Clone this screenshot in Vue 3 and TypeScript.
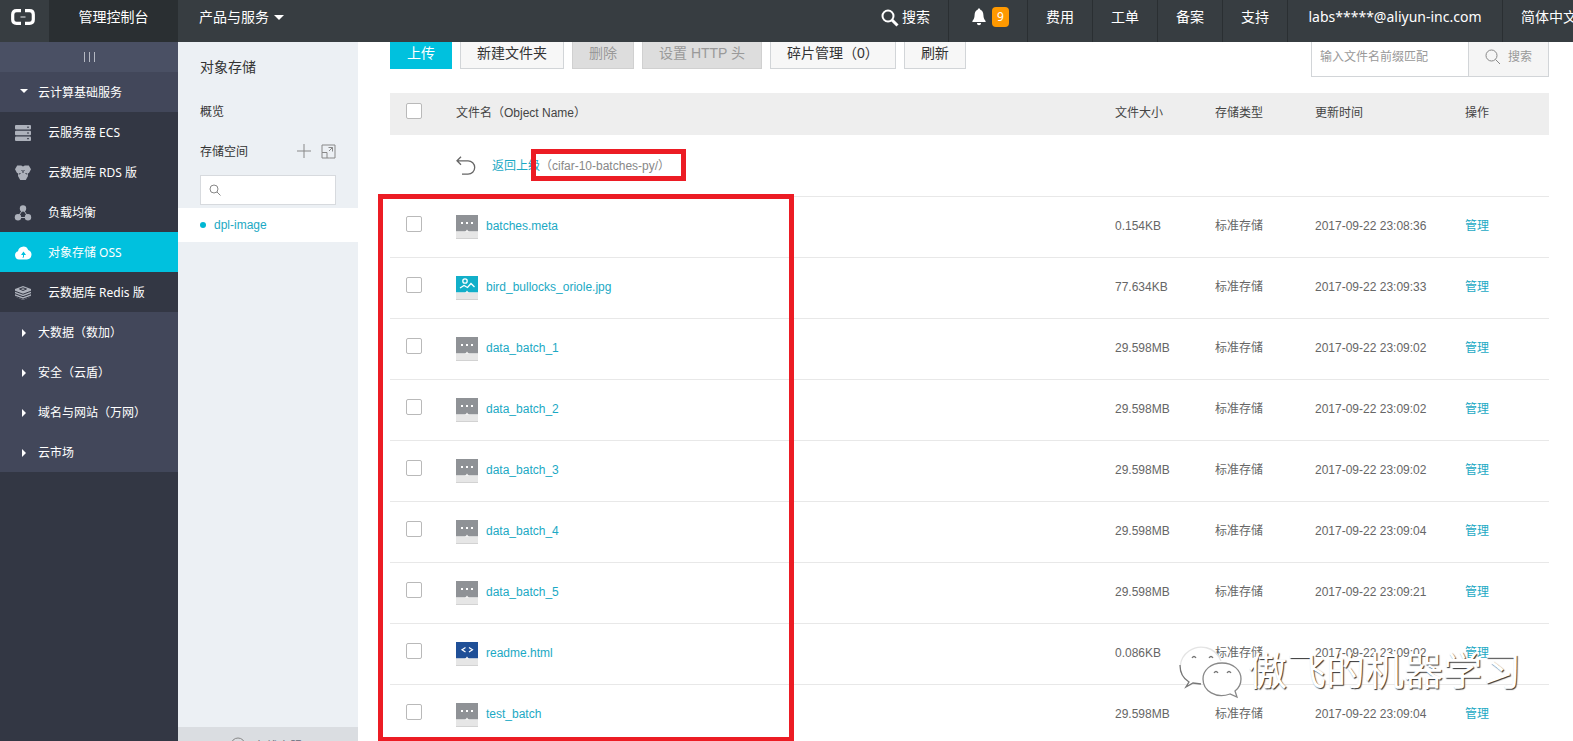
<script setup lang="ts">
import { ref } from 'vue'

type FileKind = 'other' | 'image' | 'code'
interface FileRow {
  name: string
  kind: FileKind
  size: string
  time: string
}

const files: FileRow[] = [
  { name: 'batches.meta', kind: 'other', size: '0.154KB', time: '2017-09-22 23:08:36' },
  { name: 'bird_bullocks_oriole.jpg', kind: 'image', size: '77.634KB', time: '2017-09-22 23:09:33' },
  { name: 'data_batch_1', kind: 'other', size: '29.598MB', time: '2017-09-22 23:09:02' },
  { name: 'data_batch_2', kind: 'other', size: '29.598MB', time: '2017-09-22 23:09:02' },
  { name: 'data_batch_3', kind: 'other', size: '29.598MB', time: '2017-09-22 23:09:02' },
  { name: 'data_batch_4', kind: 'other', size: '29.598MB', time: '2017-09-22 23:09:04' },
  { name: 'data_batch_5', kind: 'other', size: '29.598MB', time: '2017-09-22 23:09:21' },
  { name: 'readme.html', kind: 'code', size: '0.086KB', time: '2017-09-22 23:09:02' },
  { name: 'test_batch', kind: 'other', size: '29.598MB', time: '2017-09-22 23:09:04' },
]

const products = [
  { id: 'ecs', label: '云服务器 ECS' },
  { id: 'rds', label: '云数据库 RDS 版' },
  { id: 'slb', label: '负载均衡' },
  { id: 'oss', label: '对象存储 OSS' },
  { id: 'redis', label: '云数据库 Redis 版' },
]
const groups = ['大数据（数加）', '安全（云盾）', '域名与网站（万网）', '云市场']
const topLinks = ['费用', '工单', '备案', '支持']

const selected = ref<string[]>([])
const prefix = ref('')
const bucketQuery = ref('')

function toggleAll(e: Event) {
  selected.value = (e.target as HTMLInputElement).checked ? files.map((f) => f.name) : []
}
</script>

<template>
  <div class="page">
    <header class="topbar">
      <a class="logo" href="#" aria-label="首页">
        <svg width="24" height="16" viewBox="0 0 24 16">
          <path d="M10 1.700H5.500Q1.700 1.700 1.700 5.500V10.500Q1.700 14.300 5.500 14.300H10M14 1.700H18.500Q22.300 1.700 22.300 5.500V10.500Q22.300 14.300 18.500 14.300H14" fill="none" stroke="#fff" stroke-width="3.200" />
          <path d="M9.500 8h5" stroke="#aeb1b3" stroke-width="1.500" />
        </svg>
      </a>
      <a class="console" href="#">管理控制台</a>
      <button class="products" type="button">产品与服务<span class="caret"></span></button>
      <nav class="topnav">
        <a class="find" href="#">
          <svg width="18" height="18" viewBox="0 0 18 18" fill="none" stroke="#fff">
            <circle cx="7" cy="7" r="5.500" stroke-width="2" />
            <path d="M11 11l5.500 5.500" stroke-width="3" />
          </svg>搜索</a>
        <a class="bell" href="#" aria-label="消息">
          <svg width="14" height="18" viewBox="0 0 14 18" fill="#fff">
            <path d="M7 0.500c.8 0 1.300.5 1.300 1.300C10.500 2.500 11.300 4.500 11.400 7c.1 3 .8 4.500 2.200 6v1H.4v-1C1.800 11.500 2.500 10 2.600 7c.1-2.500.9-4.500 3.100-5.200C5.700 1 6.200.500 7 .500zM5 15h4c0 1.300-.8 2.300-2 2.300S5 16.300 5 15z" />
          </svg>
          <span class="badge">9</span>
        </a>
        <a v-for="l in topLinks" :key="l" href="#">{{ l }}</a>
        <a class="account" href="#">labs*****@aliyun-inc.com</a>
        <a class="lang" href="#">简体中文</a>
      </nav>
    </header>

    <div class="body">
      <aside class="side">
        <button class="fold" type="button" aria-label="收起导航"><i></i><i></i><i></i></button>
        <button class="group open" type="button"><span class="tri down"></span>云计算基础服务</button>
        <a v-for="p in products" :key="p.id" href="#" class="product" :class="{ active: p.id === 'oss' }">
          <svg width="18" height="18" viewBox="0 0 18 18">
            <g v-if="p.id === 'ecs'">
              <rect x="1" y="1" width="16" height="4.500" rx="1" />
              <rect x="1" y="6.700" width="16" height="4.500" rx="1" />
              <rect x="1" y="12.400" width="16" height="4.500" rx="1" />
              <path class="cut" d="M13 3.200h2M13 9h2M13 14.700h2" />
            </g>
            <g v-else-if="p.id === 'rds'">
              <path d="M3.200 1.500h4L9 2.500l1.800-1h4L17 5.200l-2 3.800-1.300.6.300 2.400-2.200 4H6.200L4 12l.3-2.400L3 9 1 5.200z" />
              <path class="cut" d="M7.500 6l1.500 1.500L10.500 6M9 7.500V9M5 10l1.500-.5M13 10l-1.500-.5" />
            </g>
            <g v-else-if="p.id === 'slb'">
              <path class="line thin" d="M9 5L4 13M9 5l5 8M4 13.500h10" />
              <circle cx="9" cy="4.500" r="3.200" /><circle cx="4" cy="13.200" r="3.200" /><circle cx="14" cy="13.200" r="3.200" />
            </g>
            <g v-else-if="p.id === 'oss'">
              <path d="M5 15.500a4.200 4.200 0 0 1-1-8.200A5.300 5.300 0 0 1 14.200 6 4.900 4.900 0 0 1 13 15.500z" />
              <path d="M9.500 7.500l2.500 3.500h-2v1.500q0 1.500-2 1.500 1-.5 1-1.500V11H7z" fill="#00c1de" />
            </g>
            <g v-else>
              <path d="M9 2l8 3v7.500L9 16l-8-3.500V5z" />
              <path class="cut" d="M1 7.200l8 3 8-3M1 9.700l8 3 8-3M1 12.200l8 3 8-3M5.500 5L9 3.800 12.500 5 9 6.500z" />
            </g>
          </svg>{{ p.label }}</a>
        <button v-for="g in groups" :key="g" class="group" type="button"><span class="tri"></span>{{ g }}</button>
      </aside>

      <aside class="sub">
        <h1>对象存储</h1>
        <a class="overview" href="#">概览</a>
        <div class="space">
          <span>存储空间</span>
          <button type="button" aria-label="新建存储空间">
            <svg width="14" height="14" viewBox="0 0 14 14"><path d="M7 0v14M0 7h14" /></svg>
          </button>
          <button type="button" aria-label="展开">
            <svg class="expand" width="15" height="15" viewBox="0 0 15 15"><path d="M1 6V1h13v13H8.500M1 8.500h5V14H1zM1 6v2.500M6 14h2.500M8 7l3.500-3.500M7.500 3.500h4v4" /></svg>
          </button>
        </div>
        <label class="bucket-search">
          <svg width="12" height="12" viewBox="0 0 12 12"><circle cx="5" cy="5" r="4" /><path d="M8 8l3.500 3.500" /></svg>
          <input v-model="bucketQuery" type="text" aria-label="搜索存储空间" />
        </label>
        <a class="bucket" href="#">dpl-image</a>
        <a class="subfoot" href="#">
          <svg width="16" height="16" viewBox="0 0 16 16"><circle cx="8" cy="8" r="7" /></svg>在线客服</a>
      </aside>

      <main class="main">
        <div class="toolbar">
          <button class="btn primary" type="button">上传</button>
          <button class="btn" type="button">新建文件夹</button>
          <button class="btn" type="button" disabled>删除</button>
          <button class="btn" type="button" disabled>设置 HTTP 头</button>
          <button class="btn" type="button">碎片管理（0）</button>
          <button class="btn" type="button">刷新</button>
          <form class="search" @submit.prevent>
            <input v-model="prefix" type="text" placeholder="输入文件名前缀匹配" aria-label="文件名前缀" />
            <button type="submit">
              <svg width="16" height="16" viewBox="0 0 16 16"><circle cx="6.500" cy="6.500" r="5.500" /><path d="M10.500 10.500l4.500 4.500" /></svg>搜索
            </button>
          </form>
        </div>

        <div class="listing">
          <table>
            <colgroup>
              <col class="c-check" /><col /><col class="c-mid" /><col class="c-mid" /><col class="c-time" /><col class="c-op" />
            </colgroup>
            <thead>
              <tr>
                <th><input type="checkbox" aria-label="全选" @change="toggleAll" /></th>
                <th>文件名（Object Name）</th>
                <th>文件大小</th>
                <th>存储类型</th>
                <th>更新时间</th>
                <th>操作</th>
              </tr>
            </thead>
            <tbody>
              <tr class="up">
                <td></td>
                <td colspan="5">
                  <div class="back">
                    <svg width="20" height="20" viewBox="0 0 20 20"><path d="M5 .8L1 4.800l4 4M1.500 4.800H12a6.700 6.700 0 0 1 0 13.400H6" /></svg>
                    <a href="#">返回上级</a>
                    <span class="path">（cifar-10-batches-py/）<span class="mark mark-path"></span></span>
                  </div>
                </td>
              </tr>
              <tr v-for="f in files" :key="f.name">
                <td><input v-model="selected" type="checkbox" :value="f.name" :aria-label="f.name" /></td>
                <td>
                  <a class="file" href="#">
                    <svg class="ficon" :class="f.kind" width="22" height="24" viewBox="0 0 22 24">
                      <rect class="top" width="22" height="16.500" />
                      <rect y="16.500" width="22" height="7.500" fill="#e6e6e6" />
                      <path d="M0 23.500h22" stroke="#d2d2d2" />
                      <path d="M9 17l2-2.500 2 2.500z" fill="#f2f2f2" />
                      <path v-if="f.kind === 'other'" d="M5 8h2M10 8h2M15 8h2" stroke="#fff" stroke-width="2" />
                      <g v-else-if="f.kind === 'image'" fill="none" stroke="#fff" stroke-width="1.300">
                        <circle cx="9" cy="5" r="2.200" />
                        <path d="M4 12l4-2.500 3.500 2L15 7.500l3.500 3.500" />
                      </g>
                      <path v-else d="M9.500 5.500L6 7.800l3.500 2.300M13 5.500l3.500 2.300-3.500 2.300" fill="none" stroke="#fff" stroke-width="1.200" />
                    </svg>{{ f.name }}</a>
                </td>
                <td>{{ f.size }}</td>
                <td>标准存储</td>
                <td>{{ f.time }}</td>
                <td><a href="#">管理</a></td>
              </tr>
            </tbody>
          </table>
          <span class="mark mark-files"></span>
        </div>
      </main>
    </div>

    <div class="watermark">
      <svg width="64" height="54" viewBox="0 0 64 54" fill="#fff" stroke-width="1.300">
        <path d="M22 39l-7-.5-8 3 3-5C-3 28 0 13 10 6c10-7 26-5 32 10" stroke="#e4e4e4" />
        <path d="M22 39l-8-1-7 4 3-5C5 34 1 28 1 20" stroke="#777" />
        <path d="M24 34c0-9 8-16 19-16s19 7 19 16c0 5-2 9-6 12l2 6-7-3c-14 5-27-3-27-15z" stroke="#888" />
        <path d="M13 13q2-3 4 0M30 13q2-3 4 0M35 28q2-3 4 0M48 28q2-3 4 0" fill="none" stroke="#777" />
      </svg>
      <span>傲飞的机器学习</span>
    </div>
  </div>
</template>

<style>
html, body, #app { height: 100%; }
body { margin: 0; overflow: hidden; }
</style>

<style scoped>
* { box-sizing: border-box; }
.page {
  position: relative;
  display: flex;
  flex-direction: column;
  height: 100%;
  overflow: hidden;
  background: #fff;
  color: #333;
  font: 12px/20px "Liberation Sans", "Noto Sans CJK SC", sans-serif;
}
a { color: #1ba9c4; text-decoration: none; }
button, input { font: inherit; color: inherit; border: 0; background: none; padding: 0; margin: 0; outline: 0; }
.topbar {
  position: relative;
  z-index: 2;
  display: flex;
  flex: none;
  height: 42px;
  background: #373d41;
  color: #fff;
  font: 14px/34px "Noto Sans", "Noto Sans CJK SC", sans-serif;
}
.topbar a, .products { color: #fff; white-space: nowrap; }
.logo { width: 49px; padding: 9px 0 0 11px; line-height: 0; }
.console { width: 129px; background: #2a2f32; text-align: center; }
.products { display: flex; align-items: center; height: 34px; padding-left: 21px; }
.caret { margin-left: 5px; border: 5px solid transparent; border-top-color: #fff; border-bottom: 0; }
.topnav { display: flex; margin-left: auto; margin-right: -22px; }
.topnav a { padding: 0 18px; border-left: 1px solid #2a2f32; }
.topnav .find { display: flex; gap: 3px; border: 0; }
.topnav .find svg { margin-top: 9px; }
.topnav .bell { display: flex; gap: 6px; padding-left: 23px; }
.topnav .account { width: 215px; text-align: center; }
.bell svg { margin-top: 8px; }
.badge { width: 17px; height: 20px; margin-top: 7px; border-radius: 4px; background: #ff9900; font-size: 12px; line-height: 20px; text-align: center; }
.body { display: flex; flex: 1; min-height: 0; }
.side { flex: none; width: 178px; background: #333744; color: #fff; font-family: "Noto Sans", "Noto Sans CJK SC", sans-serif; }
.fold { display: flex; justify-content: center; align-items: center; gap: 4px; width: 100%; height: 30px; background: #4a5064; }
.fold i { width: 1px; height: 10px; background: #b4b8c2; }
.group, .product { display: flex; align-items: center; width: 100%; height: 40px; padding-top: 2px; white-space: nowrap; }
.group { background: #42475a; text-align: left; padding-left: 22px; }
.tri { width: 16px; flex: none; }
.tri::before { content: ""; display: block; width: 0; border: 4px solid transparent; border-left-color: #fff; border-right: 0; }
.tri.down::before { margin: -4px 0 0 -2px; border: 4px solid transparent; border-top-color: #fff; border-bottom: 0; }
.product { gap: 16px; padding-left: 14px; color: #fff; }
.product svg { fill: #adb1bb; }
.product .cut { stroke: #333744; stroke-width: 1; fill: none; }
.product .line { stroke: #adb1bb; stroke-width: 2; fill: none; }
.product .thin { stroke-width: 1; }
.product.active { background: #00c1de; }
.product.active svg { fill: #fff; }
.sub { display: flex; flex-direction: column; flex: none; width: 180px; background: #ecf0f4; }
.sub h1 { margin: 15px 22px 0; font-size: 14px; line-height: 20px; font-weight: 400; }
.overview { margin: 25px 22px 0; color: #333; }
.space { display: flex; align-items: center; gap: 10px; margin: 20px 22px 0; }
.space span { flex: 1; }
.space button { display: flex; margin-top: -2px; }
.space svg, .bucket-search svg, .search svg, .subfoot svg { fill: none; stroke: #888; }
.bucket-search { display: flex; align-items: center; height: 30px; margin: 13px 22px 0; padding-left: 8px; border: 1px solid #d7dade; background: #fff; }
.bucket-search input { flex: 1; min-width: 0; padding-left: 6px; }
.bucket { display: flex; align-items: center; gap: 8px; height: 34px; margin-top: 3px; padding-left: 22px; background: #fff; }
.bucket::before { content: ""; width: 6px; height: 6px; border-radius: 3px; background: #00b7d3; }
.subfoot { display: flex; flex: none; justify-content: center; gap: 8px; height: 14px; margin-top: auto; padding: 10px 4px 0 0; overflow: hidden; background: #dadde1; color: #667; }
.subfoot svg { flex: none; }
.main { flex: 1; min-width: 0; padding: 0 24px 0 32px; }
.toolbar { display: flex; align-items: flex-start; gap: 8px; margin-top: -5px; }
.btn { height: 32px; padding: 0 16px; border: 1px solid #d2d5d8; background: #f7f7f7; font-size: 14px; white-space: nowrap; }
.btn.primary { background: #00c1de; border-color: #00c1de; color: #fff; }
.btn:disabled { background: #ddd; border-color: #d0d0d0; color: #999; }
.search { display: flex; width: 238px; height: 40px; margin-left: auto; border: 1px solid #d2d5d8; color: #999; }
.search input { flex: 1; min-width: 0; padding-left: 8px; }
.search input::placeholder { color: #999; opacity: 1; }
.search button { display: flex; align-items: center; justify-content: center; gap: 7px; width: 80px; border-left: 1px solid #d2d5d8; background: #f5f5f5; }
.listing { position: relative; margin-top: 16px; }
table { width: 100%; table-layout: fixed; border-collapse: collapse; }
.c-check { width: 66px; }
.c-mid { width: 100px; }
.c-time { width: 150px; }
.c-op { width: 84px; }
th, td { padding: 0 0 2px; text-align: left; font-weight: 400; white-space: nowrap; }
th { height: 42px; background: #eee; color: #444; }
td { height: 61px; border-bottom: 1px solid #e8e8e8; color: #666; }
.up td { padding: 2px 0 0; }
th:first-child, td:first-child { padding-left: 16px; }
input[type="checkbox"] { appearance: none; display: block; width: 16px; height: 16px; margin-bottom: 4px; border: 1px solid #b9b9b9; border-radius: 2px; background: #fff; }
input[type="checkbox"]:checked { background: #00c1de; }
.file { display: flex; align-items: center; gap: 8px; }
.ficon { margin-top: 2px; }
.ficon .top { fill: #8f9296; }
.ficon.image .top { fill: #12afc9; }
.ficon.code .top { fill: #1f4f97; }
.back { display: flex; align-items: center; }
.back svg { fill: none; stroke: #666; stroke-width: 1.3; }
.back a { margin-left: 16px; }
.path { position: relative; color: #888; }
.mark { position: absolute; border: 5px solid #ec1c24; pointer-events: none; }
.mark-path { left: -9px; right: -16px; top: -7px; height: 32px; }
.mark-files { left: -12px; top: 101px; bottom: 4px; width: 416px; }
.watermark { position: absolute; right: 52px; bottom: 42px; display: flex; align-items: center; gap: 5px; pointer-events: none; }
.watermark span { color: #fff; font-size: 39px; line-height: 54px; text-shadow: 1px 1px 1px #333; }
</style>
